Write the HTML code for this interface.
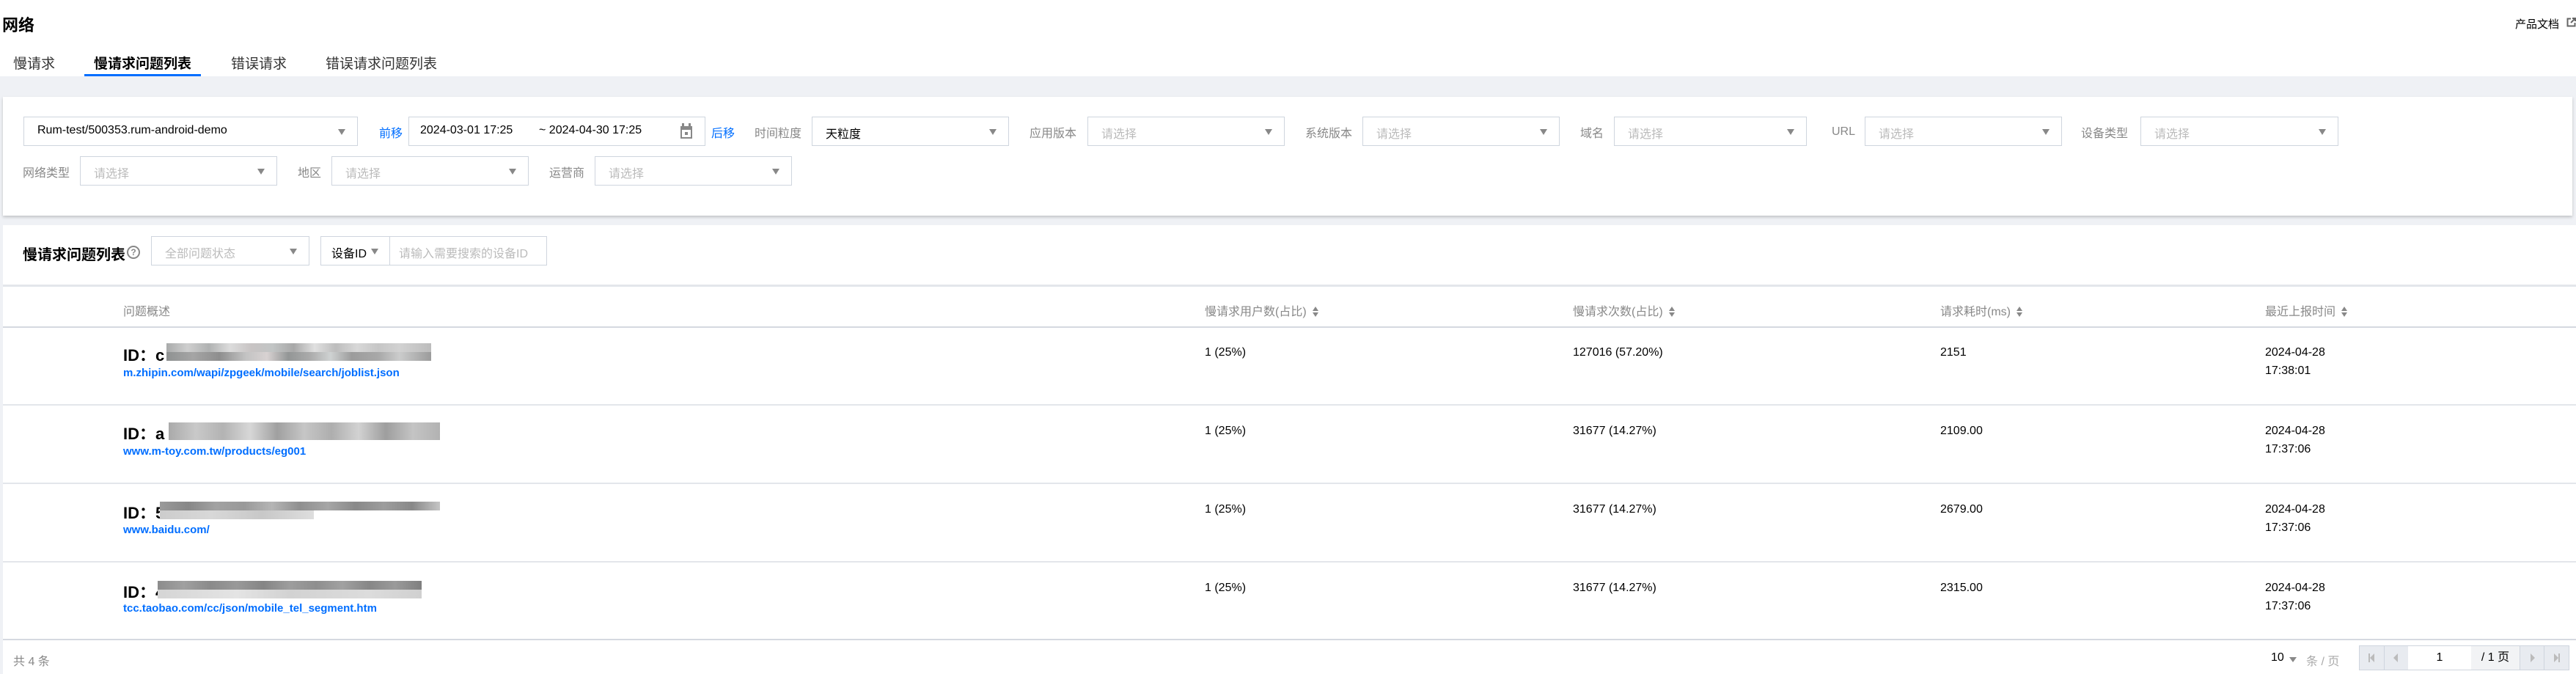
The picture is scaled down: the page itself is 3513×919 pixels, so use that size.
<!DOCTYPE html>
<html><head><meta charset="utf-8">
<style>
*{margin:0;padding:0;box-sizing:border-box}
body{width:3513px;height:919px;overflow:hidden;background:#fff;font-family:"Liberation Sans","Noto Sans CJK SC",sans-serif;color:#000;position:relative}
.a{position:absolute;white-space:nowrap}
.box{position:absolute;border:1px solid #cfd5de;background:#fff;height:40px}
.sel .ph{position:absolute;left:18px;top:9px;font-size:16px;color:#bbb}
.sel .v{position:absolute;left:18px;top:9px;font-size:16px;color:#000}
.arr{position:absolute;right:16px;top:16px;width:0;height:0;border-left:5px solid transparent;border-right:5px solid transparent;border-top:8px solid #888}
.lbl{position:absolute;font-size:16px;color:#888;white-space:nowrap}
.blue{color:#006eff}
.th{position:absolute;top:411px;font-size:16px;color:#888;white-space:nowrap}
.sort{display:inline-block;width:8px;height:14px;vertical-align:-2px;margin-left:8px;position:relative}
.sort:before{content:"";position:absolute;left:0;top:0;border-left:4px solid transparent;border-right:4px solid transparent;border-bottom:6px solid #888}
.sort:after{content:"";position:absolute;left:0;top:8px;border-left:4px solid transparent;border-right:4px solid transparent;border-top:6px solid #888}
.td{position:absolute;font-size:16px;color:#000;white-space:nowrap;line-height:25px}
.id{position:absolute;left:168px;font-size:22px;font-weight:bold;white-space:nowrap}
.lk{position:absolute;left:168px;font-size:15px;font-weight:bold;color:#006eff;white-space:nowrap}
.blur{position:absolute;height:12px}
.hl{position:absolute;left:4px;right:0;height:2px;background:#e3e6eb}
</style></head><body>
<div class="a" style="left:3px;top:17px;font-size:22px;font-weight:bold">网络</div>
<div class="a" style="left:3430px;top:22px;font-size:15px">产品文档</div>
<svg class="a" style="left:3500px;top:24px" width="13" height="13" viewBox="0 0 13 13"><path d="M6 1.5H1.5v10h10V7" fill="none" stroke="#666" stroke-width="2"/><path d="M8 1h4v4M12 1L6 7" fill="none" stroke="#666" stroke-width="2"/></svg>

<div class="a" style="left:18px;top:72px;font-size:19px;color:#333">慢请求</div>
<div class="a" style="left:128px;top:72px;font-size:19px;font-weight:bold">慢请求问题列表</div>
<div class="a" style="left:315px;top:72px;font-size:19px;color:#333">错误请求</div>
<div class="a" style="left:444px;top:72px;font-size:19px;color:#333">错误请求问题列表</div>
<div class="a" style="left:115px;top:101px;width:159px;height:3px;background:#006eff"></div>

<div class="a" style="left:0;top:104px;width:3513px;height:815px;background:#eff1f5"></div>

<div class="a" style="left:4px;top:132px;width:3504px;height:162px;background:#fff;box-shadow:0 2px 4px rgba(0,0,0,.2)"></div>
<div class="box sel" style="left:32px;top:159px;width:456px"><span class="v">Rum-test/500353.rum-android-demo</span><i class="arr"></i></div>
<div class="lbl blue" style="left:517px;top:168px">前移</div>
<div class="box" style="left:557px;top:159px;width:405px"><span class="a" style="left:15px;top:9px;font-size:16px">2024-03-01 17:25</span><span class="a" style="left:177px;top:9px;font-size:16px">~ 2024-04-30 17:25</span>
<svg class="a" style="left:369px;top:8px" width="18" height="22" viewBox="0 0 18 22"><rect x="1" y="4" width="16" height="17" fill="#888"/><rect x="3" y="0" width="3" height="6" fill="#888"/><rect x="12" y="0" width="3" height="6" fill="#888"/><rect x="3" y="9" width="12" height="10" fill="#fff"/><rect x="7" y="12" width="4" height="4" fill="#888"/></svg></div>
<div class="lbl blue" style="left:970px;top:168px">后移</div>
<div class="lbl" style="left:1029px;top:168px">时间粒度</div>
<div class="box sel" style="left:1107px;top:159px;width:269px"><span class="v">天粒度</span><i class="arr"></i></div>
<div class="lbl" style="left:1404px;top:168px">应用版本</div>
<div class="box sel" style="left:1483px;top:159px;width:269px"><span class="ph">请选择</span><i class="arr"></i></div>
<div class="lbl" style="left:1780px;top:168px">系统版本</div>
<div class="box sel" style="left:1858px;top:159px;width:269px"><span class="ph">请选择</span><i class="arr"></i></div>
<div class="lbl" style="left:2155px;top:168px">域名</div>
<div class="box sel" style="left:2201px;top:159px;width:263px"><span class="ph">请选择</span><i class="arr"></i></div>
<div class="lbl" style="left:2498px;top:171px">URL</div>
<div class="box sel" style="left:2543px;top:159px;width:269px"><span class="ph">请选择</span><i class="arr"></i></div>
<div class="lbl" style="left:2838px;top:168px">设备类型</div>
<div class="box sel" style="left:2919px;top:159px;width:270px"><span class="ph">请选择</span><i class="arr"></i></div>

<div class="lbl" style="left:31px;top:222px">网络类型</div>
<div class="box sel" style="left:109px;top:213px;width:269px"><span class="ph">请选择</span><i class="arr"></i></div>
<div class="lbl" style="left:406px;top:222px">地区</div>
<div class="box sel" style="left:452px;top:213px;width:269px"><span class="ph">请选择</span><i class="arr"></i></div>
<div class="lbl" style="left:749px;top:222px">运营商</div>
<div class="box sel" style="left:811px;top:213px;width:269px"><span class="ph">请选择</span><i class="arr"></i></div>

<div class="a" style="left:4px;top:307px;width:3509px;height:612px;background:#fff"></div>
<div class="a" style="left:31px;top:331px;font-size:20px;font-weight:bold">慢请求问题列表</div>
<div class="a" style="left:173px;top:335px;width:18px;height:18px;border:2px solid #888;border-radius:50%;font-size:12px;font-weight:bold;color:#888;text-align:center;line-height:14px">?</div>
<div class="box sel" style="left:206px;top:322px;width:216px"><span class="ph">全部问题状态</span><i class="arr"></i></div>
<div class="box" style="left:437px;top:322px;width:309px"><span class="a" style="left:14px;top:9px;font-size:16px">设备ID</span><i class="arr" style="right:auto;left:68px"></i><span class="a" style="left:93px;top:0;width:1px;height:38px;background:#cfd5de"></span><span class="a" style="left:106px;top:9px;font-size:16px;color:#bbb">请输入需要搜索的设备ID</span></div>

<div class="hl" style="top:388px;height:3px"></div>
<div class="th" style="left:168px">问题概述</div>
<div class="th" style="left:1643px">慢请求用户数(占比)<i class="sort"></i></div>
<div class="th" style="left:2145px">慢请求次数(占比)<i class="sort"></i></div>
<div class="th" style="left:2646px">请求耗时(ms)<i class="sort"></i></div>
<div class="th" style="left:3089px">最近上报时间<i class="sort"></i></div>
<div class="hl" style="top:445px;background:#d5d9e0"></div>

<div class="id" style="top:467px">ID：c</div>
<div class="blur" style="left:227px;top:468px;width:361px;background:linear-gradient(90deg,#a9abab,#cfcfcf 8%,#b0b2b2 16%,#dcdcdc 24%,#c8c4c4 32%,#c2c5c5 40%,#a8a8a8 48%,#e0e0e0 56%,#bdbdbd 64%,#d8d8d8 72%,#c6c6c6 80%,#d2d2d2 88%,#bcbcbc)"></div>
<div class="blur" style="left:227px;top:480px;width:361px;background:linear-gradient(90deg,#8f9292,#a5a5a5 10%,#8e8e8e 20%,#c3c3c3 30%,#d8d2d2 38%,#939696 46%,#aaaaaa 54%,#cfd2d2 62%,#9c9c9c 70%,#a8a8a8 80%,#cbcccc 88%,#9b9b9b)"></div>
<div class="lk" style="top:500px">m.zhipin.com/wapi/zpgeek/mobile/search/joblist.json</div>
<div class="td" style="left:1643px;top:468px">1 (25%)</div>
<div class="td" style="left:2145px;top:468px">127016 (57.20%)</div>
<div class="td" style="left:2646px;top:468px">2151</div>
<div class="td" style="left:3089px;top:468px">2024-04-28<br>17:38:01</div>
<div class="hl" style="top:551px"></div>

<div class="id" style="top:574px">ID：a</div>
<div class="blur" style="left:230px;top:576px;width:370px;height:24px;background:linear-gradient(90deg,#aaaaaa,#c9c9c9 10%,#b3b3b3 20%,#d7d7d7 30%,#a0a0a0 40%,#c6c6c6 50%,#aeaeae 60%,#d2d2d2 70%,#9e9e9e 80%,#c4c4c4 90%,#b2b2b2)"></div>
<div class="lk" style="top:607px">www.m-toy.com.tw/products/eg001</div>
<div class="td" style="left:1643px;top:575px">1 (25%)</div>
<div class="td" style="left:2145px;top:575px">31677 (14.27%)</div>
<div class="td" style="left:2646px;top:575px">2109.00</div>
<div class="td" style="left:3089px;top:575px">2024-04-28<br>17:37:06</div>
<div class="hl" style="top:658px"></div>

<div class="id" style="top:682px">ID：5</div>
<div class="blur" style="left:218px;top:684px;width:382px;background:linear-gradient(90deg,#9a9a9a,#878787 10%,#a2a2a2 20%,#999 30%,#b5b5b5 40%,#8f8f8f 50%,#a6a6a6 60%,#898989 70%,#9d9d9d 80%,#888 90%,#c5c5c5)"></div>
<div class="blur" style="left:218px;top:696px;width:210px;background:linear-gradient(90deg,#ccc,#d8d8d8,#c8c8c8,#dedede)"></div>
<div class="lk" style="top:714px">www.baidu.com/</div>
<div class="td" style="left:1643px;top:682px">1 (25%)</div>
<div class="td" style="left:2145px;top:682px">31677 (14.27%)</div>
<div class="td" style="left:2646px;top:682px">2679.00</div>
<div class="td" style="left:3089px;top:682px">2024-04-28<br>17:37:06</div>
<div class="hl" style="top:765px"></div>

<div class="id" style="top:790px">ID：4</div>
<div class="blur" style="left:215px;top:792px;width:360px;background:linear-gradient(90deg,#8c8c8c,#a0a0a0 10%,#8a8a8a 20%,#999 30%,#858585 40%,#9d9d9d 50%,#8e8e8e 60%,#a1a1a1 70%,#878787 80%,#9a9a9a 90%,#7f7f7f)"></div>
<div class="blur" style="left:215px;top:804px;width:360px;background:linear-gradient(90deg,#d5d5d5,#e4e4e4 30%,#d2d2d2 50%,#dcdcdc 80%,#d0d0d0)"></div>
<div class="lk" style="top:821px">tcc.taobao.com/cc/json/mobile_tel_segment.htm</div>
<div class="td" style="left:1643px;top:789px">1 (25%)</div>
<div class="td" style="left:2145px;top:789px">31677 (14.27%)</div>
<div class="td" style="left:2646px;top:789px">2315.00</div>
<div class="td" style="left:3089px;top:789px">2024-04-28<br>17:37:06</div>
<div class="hl" style="top:871px;background:#d5d9e0"></div>

<div class="a" style="left:18px;top:888px;font-size:16px;color:#888">共 4 条</div>
<div class="a" style="left:3097px;top:888px;font-size:16px">10</div>
<div class="a" style="left:3122px;top:896px;border-left:5px solid transparent;border-right:5px solid transparent;border-top:7px solid #888"></div>
<div class="a" style="left:3145px;top:888px;font-size:16px;color:#aaa">条 / 页</div>
<div class="a" style="left:3217px;top:880px;width:287px;height:34px;border:1px solid #cfd5de;background:#e8ebf0"></div>
<div class="a" style="left:3251px;top:880px;width:1px;height:34px;background:#cfd5de"></div>
<div class="a" style="left:3284px;top:881px;width:86px;height:32px;background:#fff;text-align:center;font-size:16px;line-height:32px">1</div>
<div class="a" style="left:3370px;top:881px;width:67px;height:32px;background:#f2f3f5;border-right:1px solid #cfd5de;text-align:center;font-size:16px;line-height:32px">/ 1 页</div>
<div class="a" style="left:3469px;top:880px;width:1px;height:34px;background:#cfd5de"></div>
<div class="a" style="left:3230px;top:891px;width:2px;height:12px;background:#bbb"></div>
<div class="a" style="left:3232px;top:891px;border-top:6px solid transparent;border-bottom:6px solid transparent;border-right:6px solid #bbb"></div>
<div class="a" style="left:3264px;top:891px;border-top:6px solid transparent;border-bottom:6px solid transparent;border-right:6px solid #bbb"></div>
<div class="a" style="left:3451px;top:891px;border-top:6px solid transparent;border-bottom:6px solid transparent;border-left:6px solid #bbb"></div>
<div class="a" style="left:3483px;top:891px;border-top:6px solid transparent;border-bottom:6px solid transparent;border-left:6px solid #bbb"></div>
<div class="a" style="left:3489px;top:891px;width:2px;height:12px;background:#bbb"></div>
</body></html>
